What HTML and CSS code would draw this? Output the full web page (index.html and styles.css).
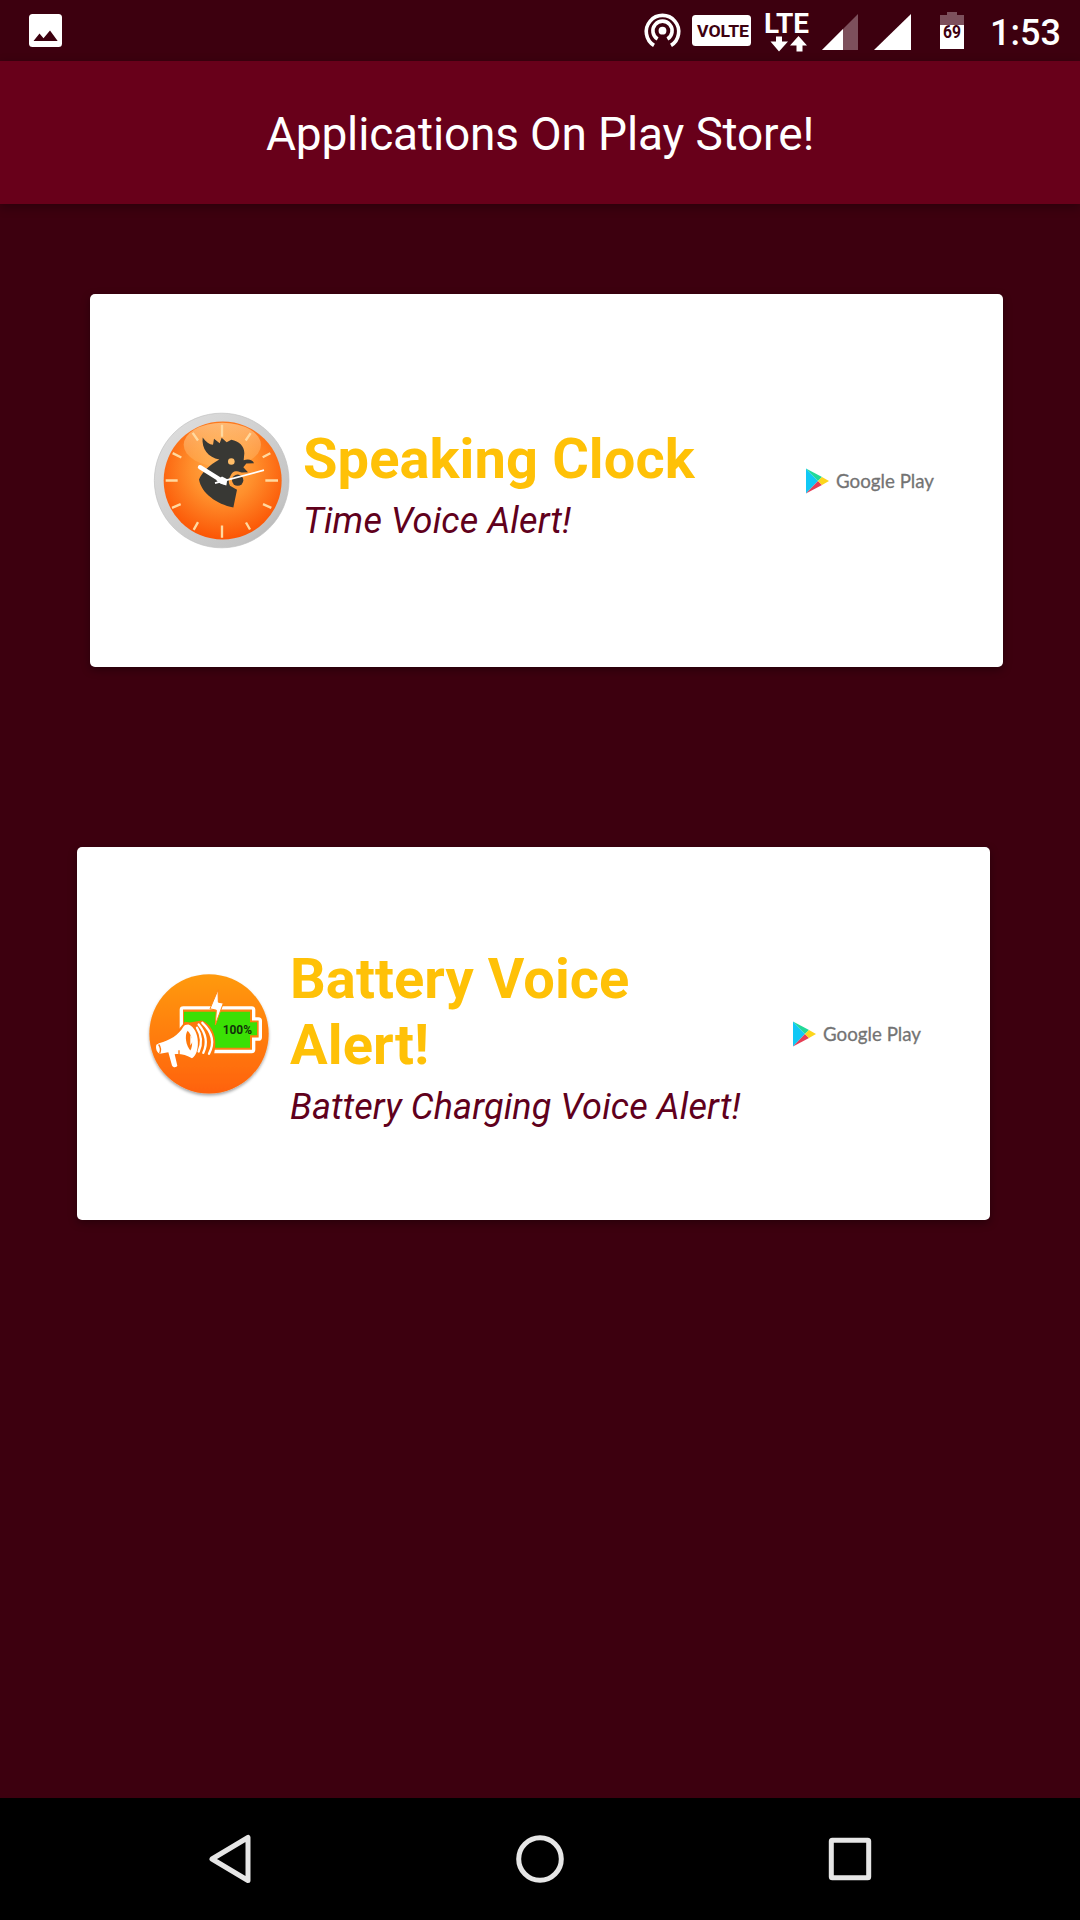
FILE: index.html
```html
<!DOCTYPE html>
<html lang="en">
  <head>
    <meta charset="UTF-8" />
    <meta name="viewport" content="width=device-width, initial-scale=1" />
    <title>Applications On Play Store!</title>
    <link rel="stylesheet" href="styles.css">
  </head>
  <body>
    <div class="status-bar">
      <svg class="picture" width="33" height="33" viewBox="0 0 33 33">
        <rect width="33" height="33" rx="3.5" fill="#fff" />
        <path d="M4.5 27 10.5 19.5 14.5 24.2 21 16.5 28.7 27Z" fill="#3d000f" />
      </svg>
      <div class="status-right">
        <svg width="37" height="37" viewBox="0 0 37 37" fill="none" stroke="#fff" stroke-width="3.6">
          <path d="M10 33.4A16.2 16.2 0 1 1 27 33.4" />
          <path d="M13.6 27A9.6 9.6 0 1 1 23.4 27" />
          <circle cx="18.5" cy="18.7" r="3.9" fill="#fff" stroke="none" />
        </svg>
        <svg class="volte" width="59" height="31" viewBox="0 0 59 31">
          <rect width="59" height="31" rx="3.5" fill="#fff" />
          <text x="5" y="21.5" textLength="52" lengthAdjust="spacingAndGlyphs" class="volte-text">VOLTE</text>
        </svg>
        <svg class="lte" width="44" height="40" viewBox="0 0 44 40" fill="#fff">
          <text x="-1" y="21" textLength="45" lengthAdjust="spacingAndGlyphs" class="lte-text">LTE</text>
          <path d="M11 24.500h6v5h6L14 39.500 5.500 29.500H11Z" />
          <path d="M31.500 39.500h6v-6H42L33.500 24 25 33.500h6.500Z" />
        </svg>
        <svg class="signal-one" width="36" height="36" viewBox="0 0 36 36">
          <path d="M0 36 36 0V36Z" fill="#7d505c" />
          <path d="M0 36 21 15V36Z" fill="#fff" />
        </svg>
        <svg class="signal-two" width="37" height="36" viewBox="0 0 37 36">
          <path d="M0 36 37 0V36Z" fill="#fff" />
        </svg>
        <svg class="battery" width="24" height="37" viewBox="0 0 24 37">
          <path d="M7 0H17V3H24V14H0V3H7Z" fill="#7d505c" />
          <path d="M0 13H24V37H0Z" fill="#fff" />
          <text x="3" y="25.5" textLength="18" lengthAdjust="spacingAndGlyphs" class="battery-text">69</text>
        </svg>
        <span class="time">1:53</span>
      </div>
    </div>

    <header>
      <h1>Applications On Play Store!</h1>
    </header>

    <main>
      <a class="card">
        <svg class="app-icon" viewBox="21 16.5 450 450">
          <defs>
            <linearGradient id="rim" x1="0" y1="0" x2="1" y2="1">
              <stop offset="0" stop-color="#e0e0e0" />
              <stop offset=".8" stop-color="#c4c4c4" />
              <stop offset="1" stop-color="#aaa" />
            </linearGradient>
            <radialGradient id="face" cx=".5" cy=".4" r=".6">
              <stop offset="0" stop-color="#ffb04d" />
              <stop offset=".45" stop-color="#ff8f2c" />
              <stop offset="1" stop-color="#fb5505" />
            </radialGradient>
            <linearGradient id="gloss" x1="0" y1="0" x2="0" y2="1">
              <stop offset="0" stop-color="#ffd9a0" stop-opacity=".65" />
              <stop offset="1" stop-color="#ffc070" stop-opacity=".25" />
            </linearGradient>
          </defs>
          <circle cx="245" cy="240" r="202" fill="url(#rim)" stroke="#c0c0c0" stroke-width="2" />
          <circle cx="248" cy="240" r="177" fill="url(#face)" />
          <ellipse cx="247" cy="133" rx="116" ry="66" fill="url(#gloss)" />
          <g stroke="#ffd9a0" stroke-width="7">
            <path d="M246 73V109M246 375V412M77 240H113M376 240H414" />
            <path d="M158 97 174 120M332 98 317 120M98 158 124 171M391 158 368 170M96 322 122 311M394 322 369 311M161 388 174 365M330 387 318 366" />
          </g>
          <path d="M188 111C198 125 208 132 219 133L222 115 239 128 245 112 260 125 274 118C297 122 313 137 313 158L311 179C326 175 338 178 342 188L319 189 310 200 324 215 305 216C288 212 280 208 272 225C266 235 264 245 270 256L291 268 280 321C230 311 184 278 177 237C186 216 207 194 238 177C205 171 184 145 188 111Z" fill="#383834" />
          <circle cx="293" cy="239" r="17" fill="#383834" />
          <circle cx="274" cy="183" r="10" fill="#ffbd68" />
          <path d="M180 200 252 245" stroke="#fff" stroke-width="13" stroke-linecap="round" />
          <path d="M225 248 372 209" stroke="#fff" stroke-width="5" />
          <path d="M229 241 246 228 262 236 259 255 242 250Z" fill="#fff" />
        </svg>
        <div class="info">
          <h2>Speaking Clock</h2>
          <p>Time Voice Alert!</p>
        </div>
        <svg class="play-logo" width="130" height="36" viewBox="0 0 130 36">
          <path d="M0 5.500V30.500L12 18Z" fill="#10c8f5" />
          <path d="M0 5.500 16 14 12 18Z" fill="#21d998" />
          <path d="M0 30.500 12 18 16 22Z" fill="#e63e55" />
          <path d="M16 14 23 18 16 22 12 18Z" fill="#fcd51c" />
          <text x="30" y="24.500" textLength="98" lengthAdjust="spacingAndGlyphs">Google Play</text>
        </svg>
      </a>

      <a class="card card-shifted">
        <svg class="app-icon" viewBox="-18 -4.5 450 450">
          <defs>
            <linearGradient id="disc" x1="0" y1="0" x2="0" y2="1">
              <stop offset="0" stop-color="#ff9a10" />
              <stop offset="1" stop-color="#ff6207" />
            </linearGradient>
            <filter id="drop" x="-10%" y="-10%" width="120%" height="125%">
              <feDropShadow dx="0" dy="6" stdDeviation="5" flood-color="#000" flood-opacity=".35" />
            </filter>
          </defs>
          <circle cx="207" cy="220" r="179" fill="url(#disc)" filter="url(#drop)" />
          <path d="M124 147Q124 142 130 142H335Q341 142 341 148V175H355Q361 175 361 181V230Q361 236 355 236H341V267Q341 273 335 273H124Z" fill="#ff8210" stroke="#fff" stroke-width="10" />
          <path d="M132 154H330V185H351V224H330V262H132Z" fill="#3be005" />
          <path d="M115 208 135 184 150 186 185 180C215 190 235 230 222 282H113Z" fill="#ff780c" />
          <path d="M234 88 210 145 229 149 226 193 250 128 235 125Z" fill="#fff" stroke="#ff850f" stroke-width="3" />
          <text x="248" y="220" textLength="88" lengthAdjust="spacingAndGlyphs" class="charge-text">100%</text>
          <path d="M49 253C46 265 51 277 60 280L85 275 96 315C99 322 109 322 112 316L104 281C121 279 140 284 156 293C181 282 182 205 145 192C137 192 133 194 130 199C116 223 91 240 57 248Z" fill="#fff" />
          <path d="M143 211C132 225 139 258 151 270C160 256 158 225 143 211Z" fill="#ff780c" />
          <path d="M151 224Q163 240 151 255Z" fill="#fff" />
          <path d="M56 252Q65 264 59 279M117 269V290" fill="none" stroke="#ff780c" stroke-width="4" />
          <g fill="none" stroke="#fff" stroke-width="7" stroke-linecap="round">
            <path d="M171 202Q192 236 176 273" />
            <path d="M176 192Q210 233 190 277" />
            <path d="M187 187Q233 230 207 280" />
          </g>
        </svg>
        <div class="info">
          <h2>Battery Voice Alert!</h2>
          <p>Battery Charging Voice Alert!</p>
        </div>
        <svg class="play-logo" width="130" height="36" viewBox="0 0 130 36">
          <path d="M0 5.500V30.500L12 18Z" fill="#10c8f5" />
          <path d="M0 5.500 16 14 12 18Z" fill="#21d998" />
          <path d="M0 30.500 12 18 16 22Z" fill="#e63e55" />
          <path d="M16 14 23 18 16 22 12 18Z" fill="#fcd51c" />
          <text x="30" y="24.500" textLength="98" lengthAdjust="spacingAndGlyphs">Google Play</text>
        </svg>
      </a>
    </main>

    <nav>
      <svg width="48" height="50" viewBox="0 0 48 50">
        <path d="M42 3.500V46.500L6 25Z" />
      </svg>
      <svg width="48" height="50" viewBox="0 0 48 50">
        <circle cx="24" cy="25" r="21.300" />
      </svg>
      <svg width="48" height="50" viewBox="0 0 48 50">
        <rect x="5.300" y="6.300" width="37.400" height="37.400" rx="1" />
      </svg>
    </nav>
  </body>
</html>
```
FILE: styles.css
```css
* {
  box-sizing: border-box;
}
body {
  font-family: Roboto, "Liberation Sans", sans-serif;
  background: #3d000f;
  margin: 0;
  height: 1920px;
  display: flex;
  flex-direction: column;
}
svg {
  display: block;
  flex: none;
  overflow: visible;
}
.status-bar {
  height: 61px;
  padding: 0 19px 0 29px;
  display: flex;
  justify-content: space-between;
  align-items: center;
}
.status-right {
  display: flex;
  align-items: center;
}
.volte {
  margin: 0 14px 0 11px;
}
.volte-text {
  font: 700 17px Roboto, sans-serif;
  fill: #3d000f;
}
.lte {
  margin: 2px 13px 0 0;
}
.lte-text {
  font: 700 27px Roboto, sans-serif;
}
.signal-one {
  margin: 2px 16px 0 0;
}
.signal-two {
  margin: 2px 29px 0 0;
}
.battery-text {
  font: 700 18px Roboto, sans-serif;
  fill: #3d000f;
}
.time {
  width: 71px;
  margin-left: 26px;
  padding-top: 4px;
  color: #fff;
  font-size: 36px;
  font-weight: 500;
  white-space: nowrap;
}
header {
  height: 143px;
  display: flex;
  align-items: center;
  justify-content: center;
  background: #68001a;
  box-shadow: 0 3px 10px rgba(0, 0, 0, 0.3);
}
h1 {
  margin: 0;
  padding-top: 3px;
  color: #fff;
  font-size: 46px;
  font-weight: 400;
  letter-spacing: -0.15px;
}
main {
  flex: 1;
  padding: 90px 77px 0 90px;
}
.card {
  display: flex;
  align-items: center;
  height: 373px;
  padding: 0 57px;
  margin-bottom: 180px;
  background: #fff;
  border-radius: 5px;
  box-shadow: 0 3px 8px rgba(0, 0, 0, 0.35);
}
.card-shifted {
  margin-left: -13px;
  margin-right: 13px;
}
.app-icon {
  width: 150px;
  height: 150px;
}
.info {
  width: 472px;
  margin: 0 31px 0 6px;
  padding-top: 8px;
}
h2 {
  margin: 0 0 8px;
  color: #ffc107;
  font-size: 56px;
  font-weight: 700;
  line-height: 66px;
  letter-spacing: 0.1px;
}
p {
  margin: 0;
  color: #60001c;
  font-size: 36px;
  font-style: italic;
  line-height: 43px;
  letter-spacing: 0.15px;
}
.play-logo text {
  font: 400 20px Lato, sans-serif;
  fill: #737373;
  stroke: #737373;
  stroke-width: 0.3;
}
.charge-text {
  font: 700 36px Roboto, sans-serif;
  fill: #12310a;
}
nav {
  height: 122px;
  padding: 0 75px;
  background: #000;
  display: grid;
  grid-template-columns: repeat(3, 1fr);
  align-items: center;
  justify-items: center;
}
nav svg {
  fill: none;
  stroke: #e6e6e6;
  stroke-width: 5;
  stroke-linejoin: round;
}
```
